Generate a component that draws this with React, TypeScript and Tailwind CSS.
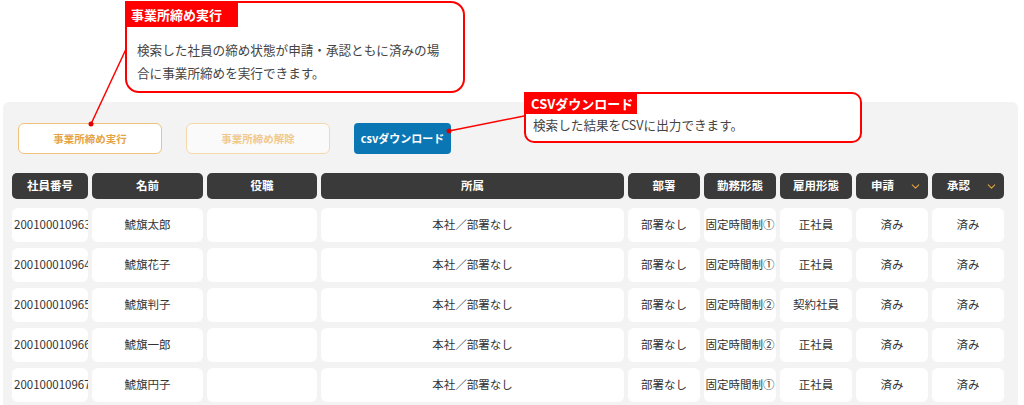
import React from 'react';
import { ChevronDown } from 'lucide-react';

interface Row {
    code: string;
    name: string;
    title: string;
    affiliation: string;
    dept: string;
    workStyle: string;
    employment: string;
    applied: string;
    approved: string;
}

const rows: Row[] = [
    { code: '2001000109631', name: '鯱旗太郎', title: '', affiliation: '本社／部署なし', dept: '部署なし', workStyle: '固定時間制①', employment: '正社員', applied: '済み', approved: '済み' },
    { code: '2001000109641', name: '鯱旗花子', title: '', affiliation: '本社／部署なし', dept: '部署なし', workStyle: '固定時間制①', employment: '正社員', applied: '済み', approved: '済み' },
    { code: '2001000109651', name: '鯱旗判子', title: '', affiliation: '本社／部署なし', dept: '部署なし', workStyle: '固定時間制②', employment: '契約社員', applied: '済み', approved: '済み' },
    { code: '2001000109661', name: '鯱旗一郎', title: '', affiliation: '本社／部署なし', dept: '部署なし', workStyle: '固定時間制②', employment: '正社員', applied: '済み', approved: '済み' },
    { code: '2001000109671', name: '鯱旗円子', title: '', affiliation: '本社／部署なし', dept: '部署なし', workStyle: '固定時間制①', employment: '正社員', applied: '済み', approved: '済み' },
];

const gridCols = 'grid grid-cols-[76px_111px_110px_303px_72px_72px_72px_72px_72px] gap-x-[4px]';

function HeaderCell({ label, filter }: { label: string; filter?: boolean }) {
    if (filter) {
        return (
            <div className="flex h-[26px] items-center justify-between rounded-[5px] bg-[#3a3a3a] pl-[15px] pr-[6px] text-[11.5px] font-bold text-white">
                <span>{label}</span>
                <ChevronDown size={13} strokeWidth={2} className="text-[#e6a23c]" />
            </div>
        );
    }
    return (
        <div className="flex h-[26px] items-center justify-center rounded-[5px] bg-[#3a3a3a] text-[11.5px] font-bold text-white">
            {label}
        </div>
    );
}

function Cell({ children, left }: { children?: React.ReactNode; left?: boolean }) {
    return (
        <div
            className={
                left
                    ? 'flex h-[34px] items-center overflow-hidden whitespace-nowrap rounded-[6px] bg-white pl-[2px] text-[11.5px] text-[#333]'
                    : 'flex h-[34px] items-center justify-center overflow-hidden whitespace-nowrap rounded-[6px] bg-white text-[11.5px] text-[#333]'
            }
        >
            {children}
        </div>
    );
}

export default function App() {
    return (
        <div className="relative h-[405px] w-[1024px] overflow-hidden bg-white font-['Noto_Sans_CJK_JP','Noto_Sans',sans-serif]">
            <div className="h-[102px]" />

            <div className="mx-[3px] h-[303px] w-[1015px] rounded-t-[6px] bg-[#f3f3f3] px-[9px] pt-[21px]">
                {/* buttons */}
                <div className="flex gap-[24px] pl-[6px]">
                    <button className="flex h-[31px] w-[144px] items-center justify-center rounded-[6px] border border-[#f0c27a] bg-white text-[10.5px] font-bold text-[#e5a443]">
                        事業所締め実行
                    </button>
                    <button className="flex h-[31px] w-[144px] items-center justify-center rounded-[6px] border border-[#f5d9aa] bg-[#fafafa] text-[10.5px] font-bold text-[#f1c98d]">
                        事業所締め解除
                    </button>
                    <button className="flex h-[31px] w-[97px] items-center justify-center rounded-[4px] bg-[#0a77b4] text-[11px] font-bold text-white">
                        csvダウンロード
                    </button>
                </div>

                {/* table */}
                <div className={`${gridCols} mt-[19px]`}>
                    <HeaderCell label="社員番号" />
                    <HeaderCell label="名前" />
                    <HeaderCell label="役職" />
                    <HeaderCell label="所属" />
                    <HeaderCell label="部署" />
                    <HeaderCell label="勤務形態" />
                    <HeaderCell label="雇用形態" />
                    <HeaderCell label="申請" filter />
                    <HeaderCell label="承認" filter />
                </div>

                <div className="mt-[9px] flex flex-col gap-[6px]">
                    {rows.map((row) => (
                        <div key={row.code} className={gridCols}>
                            <Cell left>{row.code}</Cell>
                            <Cell>{row.name}</Cell>
                            <Cell>{row.title}</Cell>
                            <Cell>{row.affiliation}</Cell>
                            <Cell>{row.dept}</Cell>
                            <Cell>{row.workStyle}</Cell>
                            <Cell>{row.employment}</Cell>
                            <Cell>{row.applied}</Cell>
                            <Cell>{row.approved}</Cell>
                        </div>
                    ))}
                </div>
            </div>

            {/* annotation leader lines */}
            <svg className="pointer-events-none absolute left-0 top-0" width="1024" height="405">
                <line x1="127" y1="47" x2="91" y2="124" stroke="#ff0000" strokeWidth="1.5" />
                <circle cx="91" cy="124" r="2.5" fill="#e00000" />
                <line x1="524" y1="116" x2="449" y2="131" stroke="#ff0000" strokeWidth="1.5" />
                <circle cx="449" cy="131" r="2.5" fill="#e00000" />
            </svg>

            {/* callout: 事業所締め実行 */}
            <div className="absolute left-[125px] top-[1px] h-[92px] w-[340px] overflow-hidden rounded-[14px] rounded-tl-none border-2 border-[#ff0000] bg-white">
                <div className="flex h-[24px] w-[111px] items-center pl-[4px] text-[13px] font-bold text-white bg-[#ff0000]">
                    事業所締め実行
                </div>
                <p className="pl-[10px] pt-[11px] text-[12.6px] leading-[23px] text-[#444]">
                    検索した社員の締め状態が申請・承認ともに済みの場
                    <br />
                    合に事業所締めを実行できます。
                </p>
            </div>

            {/* callout: CSVダウンロード */}
            <div className="absolute left-[524px] top-[92px] h-[51px] w-[338px] overflow-hidden rounded-[10px] rounded-tl-none border-2 border-[#ff0000] bg-white">
                <div className="flex h-[20px] w-[111px] items-center pl-[5px] text-[13px] font-bold text-white bg-[#ff0000]">
                    CSVダウンロード
                </div>
                <p className="pl-[7px] pt-[1px] text-[12.6px] leading-[20px] text-[#444]">
                    検索した結果をCSVに出力できます。
                </p>
            </div>
        </div>
    );
}
